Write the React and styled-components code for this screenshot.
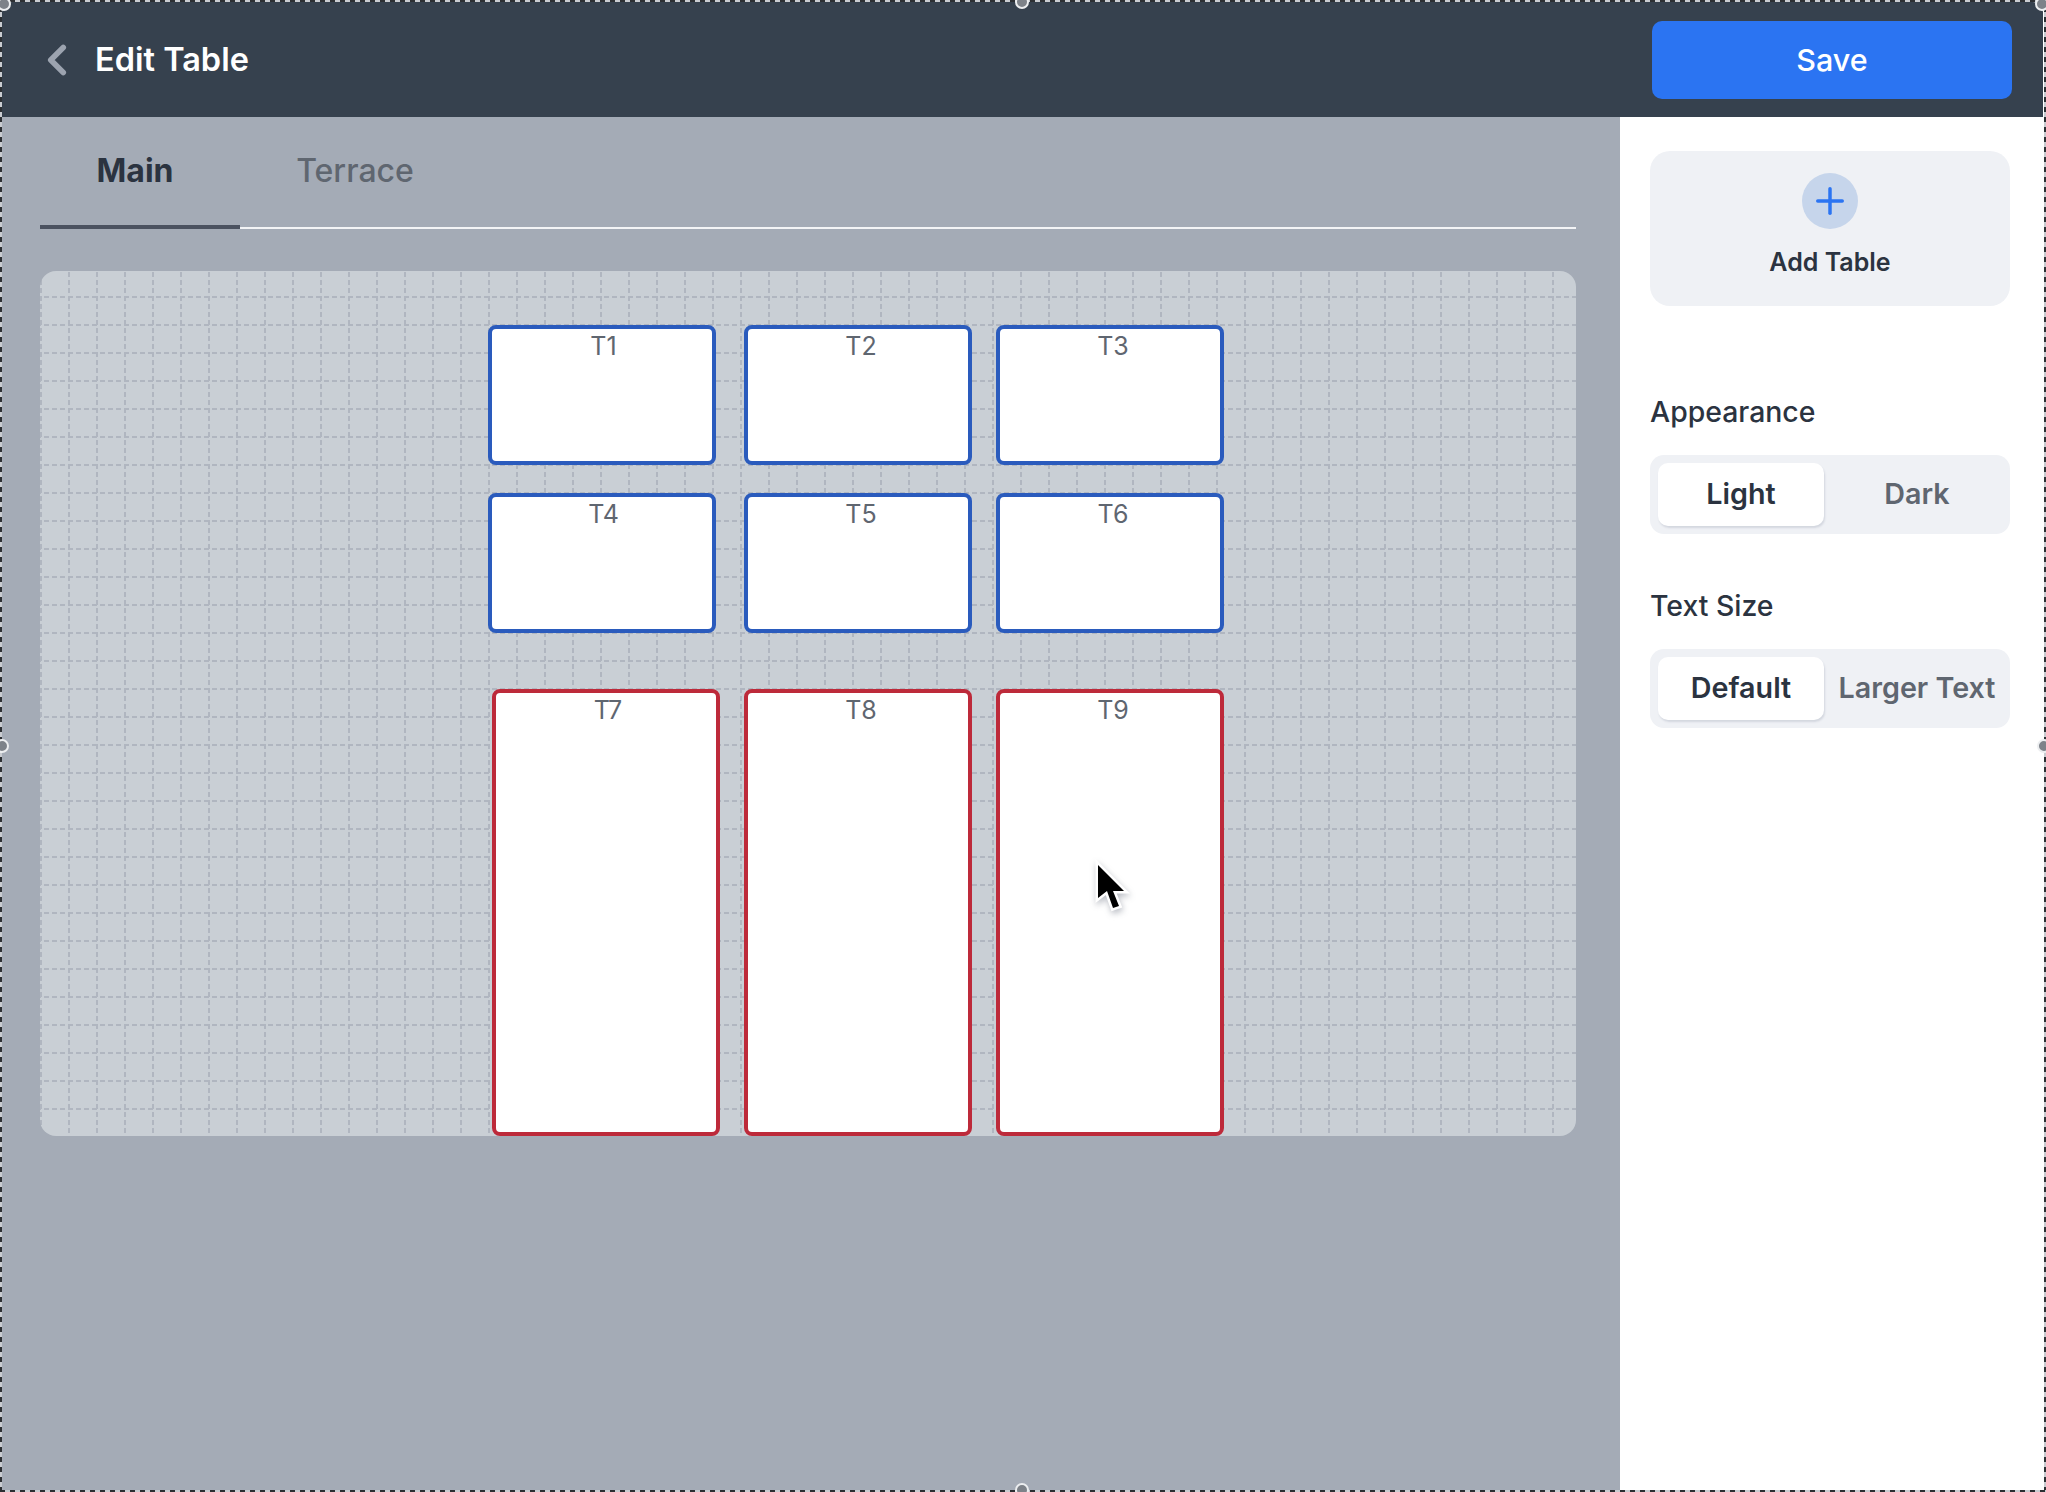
import React from "react"
import styled, { createGlobalStyle } from "styled-components"
import { ChevronLeft, Plus } from "lucide-react"

const GlobalStyle = createGlobalStyle`
  html, body {
    margin: 0;
    padding: 0;
    background: #fff;
  }
  * {
    box-sizing: border-box;
  }
`

const gridTile = encodeURIComponent(
  `<svg xmlns="http://www.w3.org/2000/svg" width="56" height="56"><path d="M0 1h56M0 29h56M1 0v56M29 0v56" stroke="#b0b6c0" stroke-width="2" stroke-dasharray="5 3" fill="none"/></svg>`
)

const Frame = styled.div`
  position: relative;
  width: 2046px;
  height: 1492px;
  overflow: hidden;
  display: flex;
  flex-direction: column;
  padding: 2px 3px 2px 2px;
  font-family: Inter, "Liberation Sans", sans-serif;
  background: #fff;
`

const Outline = styled.div`
  position: absolute;
  inset: 0;
  pointer-events: none;
  background-image:
    repeating-linear-gradient(90deg, #2c2f33 0 5px, #c9ccd1 5px 10px),
    repeating-linear-gradient(90deg, #2c2f33 0 5px, #c9ccd1 5px 10px),
    repeating-linear-gradient(0deg, #2c2f33 0 5px, #c9ccd1 5px 10px),
    repeating-linear-gradient(0deg, #2c2f33 0 5px, #c9ccd1 5px 10px);
  background-size: 100% 2px, 100% 2px, 2px 100%, 2px 100%;
  background-position: 0 0, 0 100%, 0 0, 100% 0;
  background-repeat: no-repeat;
`

const Handle = styled.span`
  position: absolute;
  left: ${p => p.$x}px;
  top: ${p => p.$y}px;
  width: 14px;
  height: 14px;
  margin: -7px 0 0 -7px;
  border-radius: 50%;
  background: #7d8289;
  border: 2px solid #eceef0;
`

const Header = styled.header`
  height: 115px;
  flex: none;
  background: #36414e;
  border-radius: 10px 10px 0 0;
  display: flex;
  align-items: center;
  justify-content: space-between;
  padding: 0 31px 0 30px;
`

const TitleGroup = styled.div`
  display: flex;
  align-items: center;
  gap: 13px;
  color: #9ca3af;
`

const Title = styled.h1`
  margin: 0;
  font-size: 32.5px;
  font-weight: 600;
  color: #fff;
`

const SaveButton = styled.button`
  width: 360px;
  height: 78px;
  border: 0;
  border-radius: 10px;
  background: #2b74f2;
  color: #fff;
  font-family: inherit;
  font-size: 30.5px;
  font-weight: 500;
`

const Body = styled.div`
  flex: 1;
  display: flex;
  min-height: 0;
`

const Stage = styled.main`
  flex: 1;
  background: #a4abb6;
  padding: 0 44px 0 38px;
`

const Tabs = styled.div`
  display: flex;
  height: 112px;
  border-bottom: 2px solid #f3f4f6;
`

const Tab = styled.div`
  width: ${p => p.$w}px;
  height: 112px;
  padding: 34px 10px 0 0;
  text-align: center;
  font-size: 32px;
  line-height: 40px;
  font-weight: ${p => (p.$active ? 700 : 500)};
  color: ${p => (p.$active ? "#2b3340" : "#5f6670")};
  border-bottom: ${p => (p.$active ? "4px solid #4b5260" : "0")};
`

const Canvas = styled.div`
  position: relative;
  margin-top: 42px;
  height: 865px;
  border-radius: 16px;
  background-color: #c9cfd5;
  background-image: url("data:image/svg+xml,${gridTile}");
  background-position: 28px 25px;
`

const TableBox = styled.div`
  position: absolute;
  left: ${p => p.$x}px;
  top: ${p => p.$y}px;
  width: 228px;
  height: ${p => p.$h}px;
  background: #fff;
  border: 4px solid ${p => (p.$tall ? "#bd2a3a" : "#2a5bbd")};
  border-radius: 8px;
  text-align: center;
  font-size: 25px;
  line-height: 30px;
  color: #5f6670;
  padding: 2px 0 0 ${p => p.$nudge}px;
`

const Cursor = styled.svg`
  position: absolute;
  left: 1090px;
  top: 855px;
  filter: drop-shadow(1px 3px 3px rgba(60, 70, 90, 0.35));
`

const Sidebar = styled.aside`
  width: 423px;
  flex: none;
  background: #fff;
  padding: 34px 33px 0 30px;
  display: flex;
  flex-direction: column;
`

const AddCard = styled.div`
  height: 155px;
  border-radius: 20px;
  background: #eff1f5;
  display: flex;
  flex-direction: column;
  align-items: center;
  padding-top: 22px;
`

const PlusCircle = styled.div`
  width: 56px;
  height: 56px;
  border-radius: 50%;
  background: #c6d5eb;
  color: #2b74f2;
  display: flex;
  align-items: center;
  justify-content: center;
`

const AddLabel = styled.div`
  margin-top: 18px;
  font-size: 25px;
  line-height: 30px;
  font-weight: 600;
  color: #2b3340;
`

const SectionLabel = styled.div`
  margin-top: ${p => p.$top}px;
  font-size: 28.4px;
  line-height: 36px;
  font-weight: 500;
  color: #2b3340;
`

const Segment = styled.div`
  margin-top: 25px;
  height: 79px;
  padding: 8px 0 8px 8px;
  border-radius: 14px;
  background: #eff1f5;
  display: grid;
  grid-template-columns: 166px 1fr;
`

const SegmentItem = styled.div`
  display: flex;
  align-items: center;
  justify-content: center;
  white-space: nowrap;
  border-radius: 10px;
  padding-bottom: 2px;
  font-size: 28.7px;
  font-weight: 600;
  color: ${p => (p.$active ? "#2b3340" : "#5f6670")};
  background: ${p => (p.$active ? "#fff" : "transparent")};
  box-shadow: ${p => (p.$active ? "1px 2px 2px rgba(90, 100, 130, 0.18)" : "none")};
`

const tables = [
  { name: "T1", x: 448, y: 54, h: 140, nudge: 3 },
  { name: "T2", x: 704, y: 54, h: 140, nudge: 6 },
  { name: "T3", x: 956, y: 54, h: 140, nudge: 6 },
  { name: "T4", x: 448, y: 222, h: 140, nudge: 3 },
  { name: "T5", x: 704, y: 222, h: 140, nudge: 6 },
  { name: "T6", x: 956, y: 222, h: 140, nudge: 6 },
  { name: "T7", x: 452, y: 418, h: 447, nudge: 4, tall: true },
  { name: "T8", x: 704, y: 418, h: 447, nudge: 6, tall: true },
  { name: "T9", x: 956, y: 418, h: 447, nudge: 6, tall: true },
]

const handles = [
  [4, 4], [1022, 2], [2042, 4],
  [2, 746], [2044, 746],
  [1022, 1490],
]

export default function App() {
  return (
    <Frame>
      <GlobalStyle />
      <Header>
        <TitleGroup>
          <ChevronLeft size={50} strokeWidth={2.7} />
          <Title>Edit Table</Title>
        </TitleGroup>
        <SaveButton>Save</SaveButton>
      </Header>
      <Body>
        <Stage>
          <Tabs>
            <Tab $active $w={200}>Main</Tab>
            <Tab $w={240}>Terrace</Tab>
          </Tabs>
          <Canvas>
            {tables.map(t => (
              <TableBox key={t.name} $x={t.x} $y={t.y} $h={t.h} $nudge={t.nudge} $tall={t.tall}>{t.name}</TableBox>
            ))}
          </Canvas>
        </Stage>
        <Sidebar>
          <AddCard>
            <PlusCircle><Plus size={42} strokeWidth={2} /></PlusCircle>
            <AddLabel>Add Table</AddLabel>
          </AddCard>
          <SectionLabel $top={88}>Appearance</SectionLabel>
          <Segment>
            <SegmentItem $active>Light</SegmentItem>
            <SegmentItem>Dark</SegmentItem>
          </Segment>
          <SectionLabel $top={54}>Text Size</SectionLabel>
          <Segment>
            <SegmentItem $active>Default</SegmentItem>
            <SegmentItem>Larger Text</SegmentItem>
          </Segment>
        </Sidebar>
      </Body>
      <Cursor width="44" height="62" viewBox="0 0 44 62">
        <path d="M8 10 L8 43 L17 36 L23 53 L29 51 L23 36 L34 36 Z" fill="#000" stroke="#fff" strokeWidth="5" paintOrder="stroke" />
      </Cursor>
      <Outline />
      {handles.map(([x, y]) => <Handle key={x + "-" + y} $x={x} $y={y} />)}
    </Frame>
  )
}
